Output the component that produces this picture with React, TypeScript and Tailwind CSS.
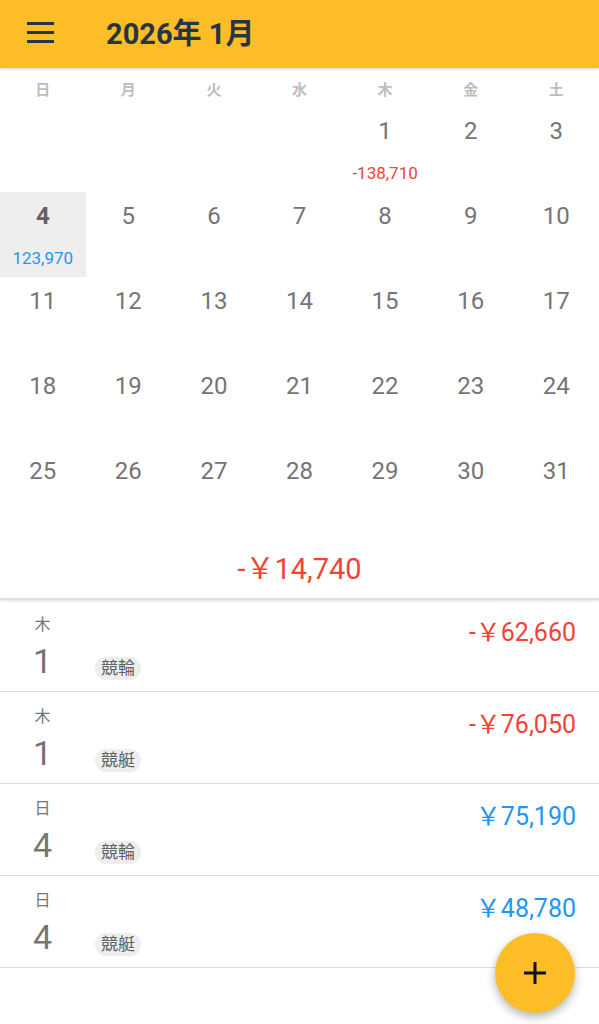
import React from 'react';

const font = { fontFamily: 'Roboto, "Noto Sans CJK JP", sans-serif' };

const weekdays = ['日', '月', '火', '水', '木', '金', '土'];

// 2026/1 starts on Thursday
const cells: (number | null)[] = [null, null, null, null, 1, 2, 3];
for (let d = 4; d <= 31; d++) cells.push(d);

const dayAmounts: Record<number, { text: string; color: string }> = {
  1: { text: '-138,710', color: 'text-[#f44336]' },
  4: { text: '123,970', color: 'text-[#2196f3]' },
};

const entries = [
  { wd: '木', day: 1, tag: '競輪', amount: '-￥62,660', neg: true },
  { wd: '木', day: 1, tag: '競艇', amount: '-￥76,050', neg: true },
  { wd: '日', day: 4, tag: '競輪', amount: '￥75,190', neg: false },
  { wd: '日', day: 4, tag: '競艇', amount: '￥48,780', neg: false },
];

export default function App() {
  return (
    <div className="relative w-[599px] h-[1024px] overflow-hidden bg-white" style={font}>
      {/* Header */}
      <div className="relative z-10 h-[68px] bg-[#fdbd27] flex items-center shadow-[0_1px_3px_rgba(0,0,0,0.2)]">
        <div className="w-[106px] pl-[27px] pb-[4px] flex flex-col gap-[6px]">
          <div className="w-[27px] h-[3px] bg-[#263445]" />
          <div className="w-[27px] h-[3px] bg-[#263445]" />
          <div className="w-[27px] h-[3px] bg-[#263445]" />
        </div>
        <div className="text-[29px] font-bold text-[#263445] leading-none">2026年 1月</div>
      </div>

      {/* Weekday row */}
      <div className="grid grid-cols-7 h-[39px] pt-[12px]">
        {weekdays.map((w) => (
          <div key={w} className="text-center text-[15px] leading-[20px] font-bold text-[#bdbdbd]">
            {w}
          </div>
        ))}
      </div>

      {/* Calendar grid */}
      <div className="grid grid-cols-7">
        {cells.map((d, i) => {
          const sel = d === 4;
          const amt = d ? dayAmounts[d] : undefined;
          return (
            <div
              key={i}
              className={`h-[85px] pt-[11px] flex flex-col items-center ${sel ? 'bg-[#eeeeee]' : ''}`}
            >
              {d && (
                <div
                  className={`text-[24px] leading-[26px] ${sel ? 'font-bold text-[#616161]' : 'text-[#757575]'}`}
                >
                  {d}
                </div>
              )}
              {amt && (
                <div className={`mt-[19px] text-[17px] leading-[20px] ${amt.color}`}>{amt.text}</div>
              )}
            </div>
          );
        })}
      </div>

      {/* Monthly total */}
      <div className="relative h-[68px] pt-[20px] text-center border-b-2 border-[#e0e0e0] shadow-[0_1px_2px_rgba(0,0,0,0.12)]">
        <span className="text-[29px] leading-[34px] text-[#f44336]">-￥14,740</span>
      </div>

      {/* Entries */}
      <div>
        {entries.map((e, i) => (
          <div key={i} className="h-[92px] flex border-b border-[#e0e0e0]">
            <div className="w-[85px] pt-[13px] flex flex-col items-center text-[#757575]">
              <div className="text-[16px] leading-[24px]">{e.wd}</div>
              <div className="mt-[4px] text-[34px] leading-[40px]">{e.day}</div>
            </div>
            <div className="flex-1 pl-[10px] pt-[57px]">
              <span className="inline-block h-[23px] px-[6px] rounded-full bg-[#eeeeee] text-[17px] leading-[23px] text-[#616161]">
                {e.tag}
              </span>
            </div>
            <div
              className={`pr-[23px] pt-[18px] text-[25px] leading-[30px] ${e.neg ? 'text-[#f44336]' : 'text-[#2196f3]'}`}
            >
              {e.amount}
            </div>
          </div>
        ))}
      </div>

      {/* FAB */}
      <button className="absolute right-[24px] bottom-[11px] w-[80px] h-[80px] rounded-full bg-[#fdbd27] flex items-center justify-center shadow-[0_4px_10px_rgba(0,0,0,0.3)]">
        <svg width="24" height="24" viewBox="0 0 24 24">
          <path d="M12 1v22M1 12h22" stroke="#111" strokeWidth="3" fill="none" />
        </svg>
      </button>
    </div>
  );
}
